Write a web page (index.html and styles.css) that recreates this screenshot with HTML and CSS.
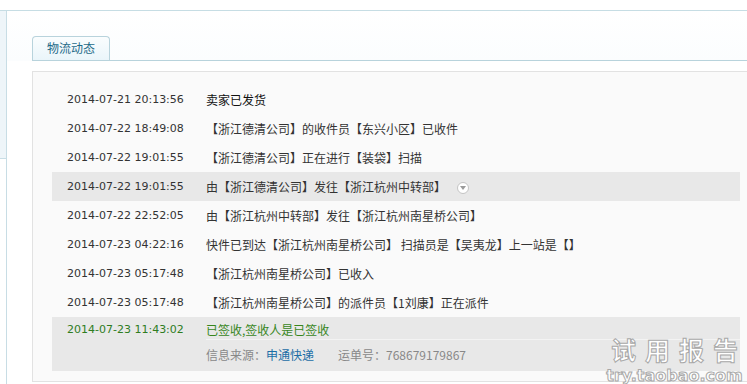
FILE: index.html
```html
<!DOCTYPE html>
<html lang="zh-CN">
<head>
    <meta charset="UTF-8">
    <title>物流动态</title>
    <link rel="stylesheet" href="styles.css">
</head>
<body>
<div class="page">
    <div class="side"><div class="side-top"></div></div>
    <div class="main">
        <div class="tabs">
            <span class="tab">物流动态</span>
        </div>
        <div class="trace">
            <ul class="rows">
                <li class="row first"><span class="time">2014-07-21 20:13:56</span><span class="desc">卖家已发货</span></li>
                <li class="row"><span class="time">2014-07-22 18:49:08</span><span class="desc">【浙江德清公司】的收件员【东兴小区】已收件</span></li>
                <li class="row"><span class="time">2014-07-22 19:01:55</span><span class="desc">【浙江德清公司】正在进行【装袋】扫描</span></li>
                <li class="row hover"><span class="time">2014-07-22 19:01:55</span><span class="desc">由【浙江德清公司】发往【浙江杭州中转部】<i class="more"></i></span></li>
                <li class="row"><span class="time">2014-07-22 22:52:05</span><span class="desc">由【浙江杭州中转部】发往【浙江杭州南星桥公司】</span></li>
                <li class="row"><span class="time">2014-07-23 04:22:16</span><span class="desc">快件已到达【浙江杭州南星桥公司】 扫描员是【吴夷龙】上一站是【】</span></li>
                <li class="row"><span class="time">2014-07-23 05:17:48</span><span class="desc">【浙江杭州南星桥公司】已收入</span></li>
                <li class="row"><span class="time">2014-07-23 05:17:48</span><span class="desc">【浙江杭州南星桥公司】的派件员【1刘康】正在派件</span></li>
                <li class="row last">
                    <span class="time">2014-07-23 11:43:02</span>
                    <div class="desc">
                        <div class="sign">已签收,签收人是已签收</div>
                        <div class="source">信息来源：<a href="#">申通快递</a><span class="bill">运单号：768679179867</span></div>
                    </div>
                </li>
            </ul>
        </div>
    </div>
</div>
<div class="watermark">
    <div class="wm-cn">试用报告</div>
    <div class="wm-en">try.taobao.com</div>
</div>
</body>
</html>
```

FILE: styles.css
```css
html, body { margin: 0; padding: 0; height: 100%; overflow: hidden; }
body { background: #fff; font-family: "Noto Sans CJK SC", sans-serif; font-size: 12px; color: #333; }
.page { display: flex; margin-top: 10px; border-top: 1px solid #c6dde4; height: 373px; }
.side { width: 6px; border-right: 1px solid #c8dde5; flex: none; }
.side-top { height: 147px; background: #eef5f9; border-bottom: 1px solid #c8dde5; }
.main { flex: 1; padding: 25px 0 0 25px; overflow: hidden; background: linear-gradient(#fff, #fbfdfe 50px, #fff 50px); }
.tabs { height: 24px; border-bottom: 1px solid #b8d3dc; }
.tab { display: inline-block; box-sizing: border-box; width: 78px; height: 24px; line-height: 22px; text-align: center; color: #1e6a88; border: 1px solid #b8d3dc; border-bottom: none; border-radius: 4px 4px 0 0; background: linear-gradient(#fafdfe, #eaf5fa); }
.trace { margin: 10px -14px 0 0; background: #fafafa; border: 1px solid #e2e2e2; padding: 13px 20px 10px 19px; }
.rows { list-style: none; margin: 0; padding: 0; }
.row { display: flex; line-height: 29px; }
.time { width: 139px; padding-left: 15px; flex: none; font-family: "DejaVu Sans", sans-serif; font-size: 11px; color: #333; }
.desc { flex: 1; }
.first .desc { color: #111; }
.hover { background: #e8e8e8; }
.more { display: inline-block; vertical-align: middle; position: relative; box-sizing: border-box; width: 12px; height: 12px; margin: -2px 0 0 11px; border: 1px solid #c4c4c4; border-radius: 50%; background: #fff; }
.more::after { content: ""; position: absolute; left: 2px; top: 3px; border: 3px solid transparent; border-top: 4px solid #9a9a9a; }
.last { background: #e8e8e8; line-height: 18px; padding: 4px 0 7px; }
.last .time { color: #2f7d1f; }
.sign { color: #37861c; border-bottom: 1px solid #f3f3f3; height: 18px; }
.source { color: #888; padding-top: 6px; width: fit-content; }
.source a { color: #1c6ea6; text-decoration: none; }
.bill { margin-left: 24px; }
.watermark { position: absolute; right: 0; bottom: 1px; width: 145px; text-align: center; color: #fff; font-weight: bold; -webkit-text-stroke: 1px #a8a8a8; }
.wm-cn { font-size: 25px; line-height: 24px; letter-spacing: 9px; margin-right: -9px; }
.wm-en { font-family: "DejaVu Sans", sans-serif; font-size: 16px; line-height: 14px; margin-top: 8px; }
```
